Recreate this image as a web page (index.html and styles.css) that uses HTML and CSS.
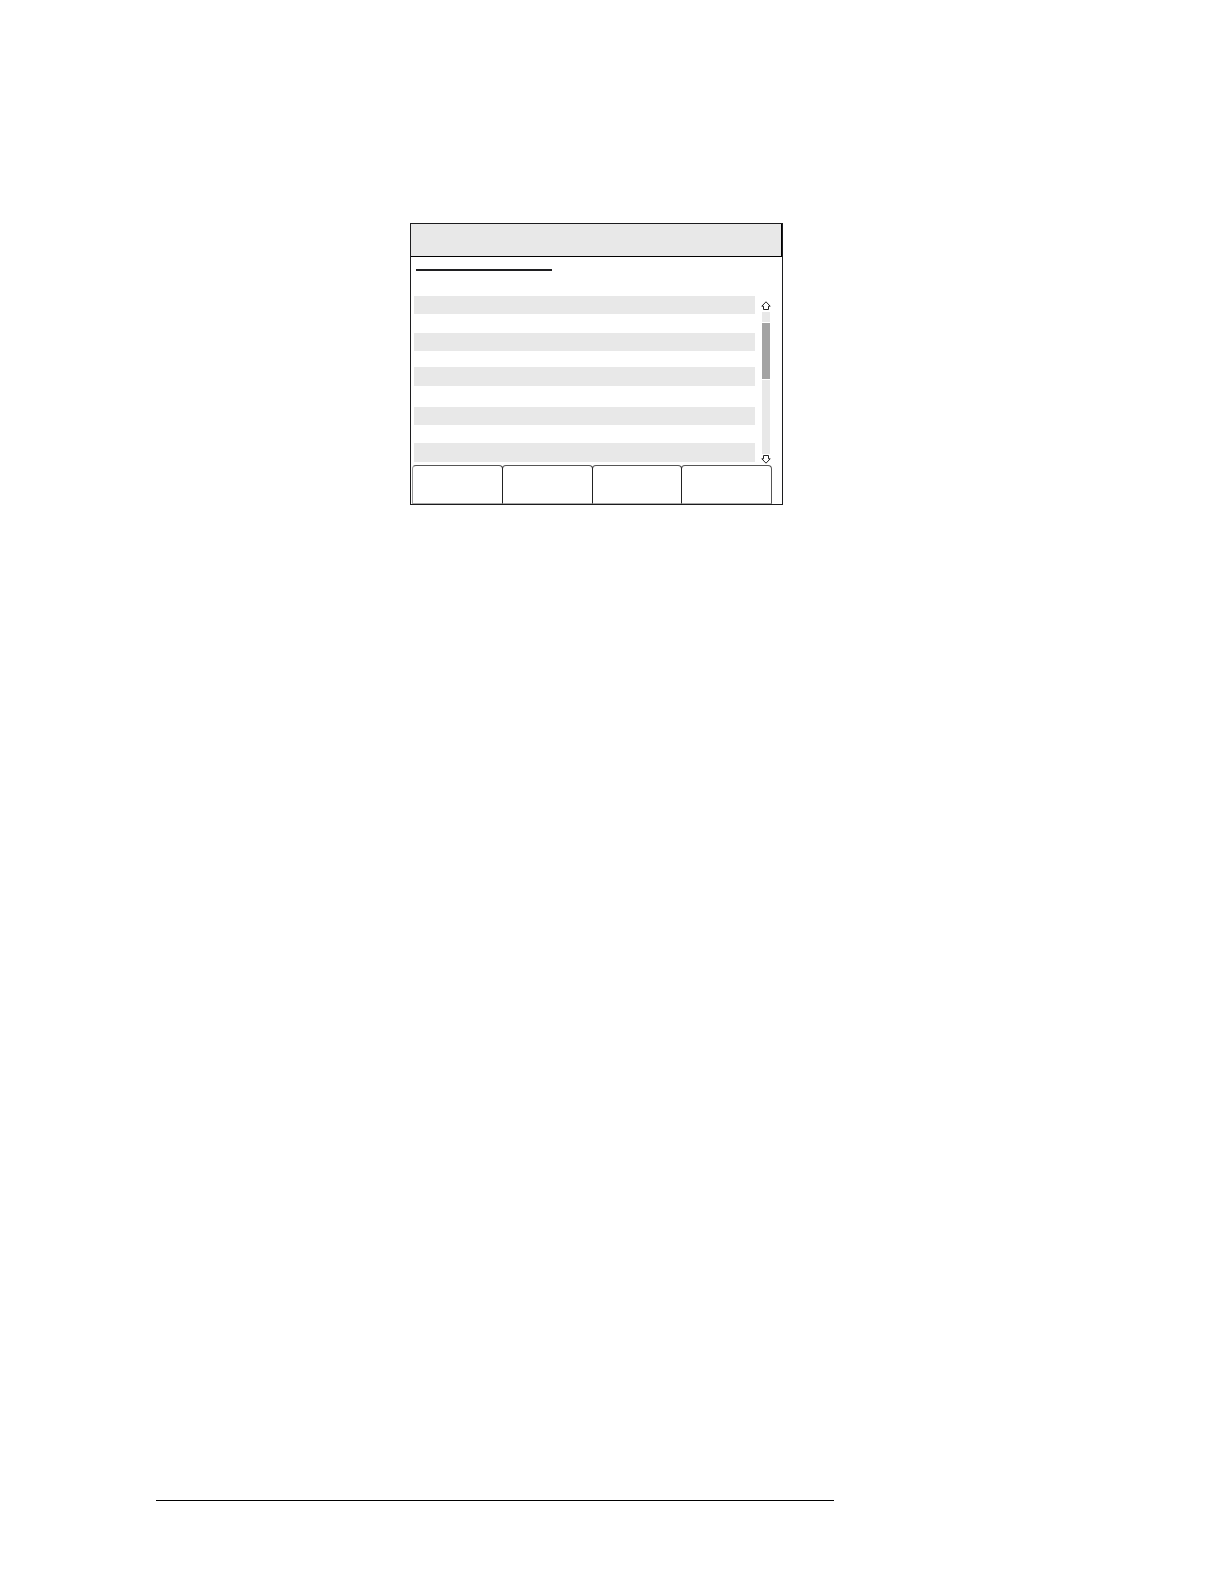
FILE: index.html
```html
<!DOCTYPE html>
<html lang="en">
<head>
    <meta charset="UTF-8" />
    <title>Display</title>
    <link rel="stylesheet" href="styles.css">
</head>
<body>
    <main class="content">
        <div class="screen">
            <div class="titlebar"></div>
            <div class="heading"></div>

            <div class="panel">
                <ul class="list">
                    <li class="row"></li>
                    <li></li>
                    <li class="row"></li>
                    <li></li>
                    <li class="row"></li>
                    <li></li>
                    <li class="row"></li>
                    <li></li>
                    <li class="row"></li>
                </ul>
                <div class="scrollbar">
                    <button class="arrow" type="button" aria-label="Scroll up">
                        <svg viewBox="0 0 10 10" width="10" height="10"><path d="M5 .8 L9.2 5.2 H7.5 V8.5 H2.5 V5.2 H.8 Z" /></svg>
                    </button>
                    <div class="track">
                        <div class="thumb"></div>
                    </div>
                    <button class="arrow" type="button" aria-label="Scroll down">
                        <svg viewBox="0 0 10 10" width="10" height="10"><path d="M5 9.2 L9.2 4.8 H7.5 V1.5 H2.5 V4.8 H.8 Z" /></svg>
                    </button>
                </div>
            </div>

            <!-- soft keys -->
            <div class="keys">
                <button class="key" type="button" aria-label="Key 1"></button>
                <button class="key" type="button" aria-label="Key 2"></button>
                <button class="key" type="button" aria-label="Key 3"></button>
                <button class="key" type="button" aria-label="Key 4"></button>
            </div>
        </div>
    </main>
    <footer class="footer"></footer>
</body>
</html>
```

FILE: styles.css
```css
*{
    box-sizing: border-box;
}
body{
    margin:0;
    min-height:100vh;
    padding:223px 156px 83px;
    display:flex;
    flex-direction:column;
    background-color:#fff;
    font-family:"Liberation Sans", Arial, sans-serif;
}
.content{
    flex:1;
    padding-left:254px;
}
.screen{
    width:373px;
    border:1px solid #1c1c1e;
}
.titlebar{
    height:33px;
    background-color:#e8e8e8;
    border-right:1px solid #000;
    border-bottom:1px solid #000;
}
.heading{
    width:136px;
    height:2px;
    margin:12px 0 25px 5px;
    background-color:#1f1f21;
}
.panel{
    display:flex;
    gap:6px;
    padding-left:3px;
}
.list{
    width:341px;
    margin:0;
    padding:0;
    list-style:none;
    display:grid;
    grid-template-rows:18px 19px 18px 16px 19px 21px 18px 18px 19px;
}
.row{
    background-color:#e8e8e8;
}
.scrollbar{
    display:flex;
    flex-direction:column;
    align-items:center;
    width:10px;
    padding-top:5px;
    margin-bottom:-2px;
}
.arrow{
    display:block;
    width:10px;
    height:10px;
    padding:0;
    border:0;
    background:none;
}
.arrow svg{
    display:block;
    fill:#fff;
    stroke:#222;
    stroke-width:1;
}
.track{
    flex:1;
    width:8px;
    margin-top:1px;
    padding-top:10px;
    background-color:#e8e8e8;
}
.thumb{
    height:58px;
    background-color:#a3a3a3;
    border:solid #fff;
    border-width:1px 0;
}
.keys{
    display:flex;
    width:360px;
    margin:3px 0 0 1px;
}
.key{
    flex:1;
    height:39px;
    padding:0;
    background-color:#fff;
    border:1px solid #555;
    border-bottom-color:#aaa;
    border-radius:4px 4px 0 0;
}
.key:first-child{
    border-left-color:#999;
}
.key + .key{
    margin-left:-1px;
    border-left-color:#222;
}
.footer{
    width:678px;
    max-width:100%;
    border-top:1px solid #000;
}
```
